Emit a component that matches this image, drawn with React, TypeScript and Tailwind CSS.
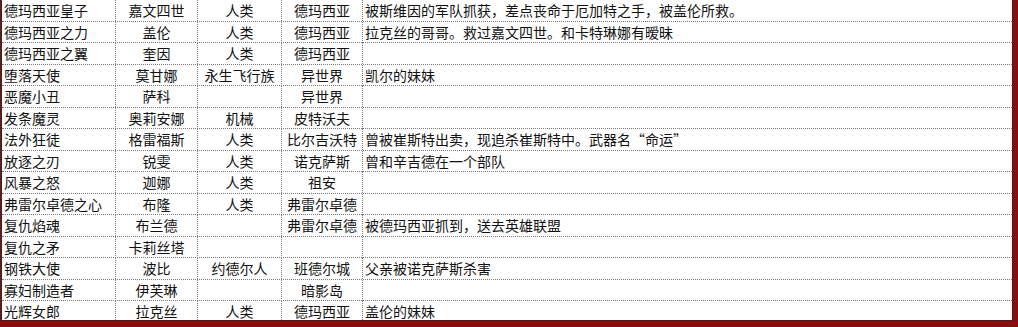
const rows: string[][] = [
  ["德玛西亚皇子", "嘉文四世", "人类", "德玛西亚", "被斯维因的军队抓获，差点丧命于厄加特之手，被盖伦所救。"],
  ["德玛西亚之力", "盖伦", "人类", "德玛西亚", "拉克丝的哥哥。救过嘉文四世。和卡特琳娜有暧昧"],
  ["德玛西亚之翼", "奎因", "人类", "德玛西亚", ""],
  ["堕落天使", "莫甘娜", "永生飞行族", "异世界", "凯尔的妹妹"],
  ["恶魔小丑", "萨科", "", "异世界", ""],
  ["发条魔灵", "奥莉安娜", "机械", "皮特沃夫", ""],
  ["法外狂徒", "格雷福斯", "人类", "比尔吉沃特", "曾被崔斯特出卖，现追杀崔斯特中。武器名“命运”"],
  ["放逐之刃", "锐雯", "人类", "诺克萨斯", "曾和辛吉德在一个部队"],
  ["风暴之怒", "迦娜", "人类", "祖安", ""],
  ["弗雷尔卓德之心", "布隆", "人类", "弗雷尔卓德", ""],
  ["复仇焰魂", "布兰德", "", "弗雷尔卓德", "被德玛西亚抓到，送去英雄联盟"],
  ["复仇之矛", "卡莉丝塔", "", "", ""],
  ["钢铁大使", "波比", "约德尔人", "班德尔城", "父亲被诺克萨斯杀害"],
  ["寡妇制造者", "伊芙琳", "", "暗影岛", ""],
  ["光辉女郎", "拉克丝", "人类", "德玛西亚", "盖伦的妹妹"],
];

export default function App() {
  return (
    <div
      className="w-[1018px] h-[327px] bg-[#8a0c0c] pl-px pr-[5px] pb-[6px] text-[14px] text-[#111111]"
      style={{ fontFamily: '"Microsoft YaHei", "Noto Sans CJK SC", sans-serif' }}
    >
      <div className="h-full bg-white border-l border-r border-b border-[#2a2a2a] overflow-hidden">
        {rows.map((r, i) => (
          <div
            key={i}
            className="grid grid-cols-[114px_82px_84px_81px_1fr] h-[21.5px] border-b border-dotted border-[#7a7a7a]"
          >
            <div className="flex items-center pl-[2px] whitespace-nowrap border-r border-dotted border-[#7a7a7a]">
              {r[0]}
            </div>
            <div className="flex items-center justify-center whitespace-nowrap border-r border-dotted border-[#7a7a7a]">
              {r[1]}
            </div>
            <div className="flex items-center justify-center whitespace-nowrap border-r border-dotted border-[#7a7a7a]">
              {r[2]}
            </div>
            <div className="flex items-center justify-center whitespace-nowrap border-r border-dotted border-[#7a7a7a]">
              {r[3]}
            </div>
            <div className="flex items-center pl-[2px] whitespace-nowrap">{r[4]}</div>
          </div>
        ))}
      </div>
    </div>
  );
}
